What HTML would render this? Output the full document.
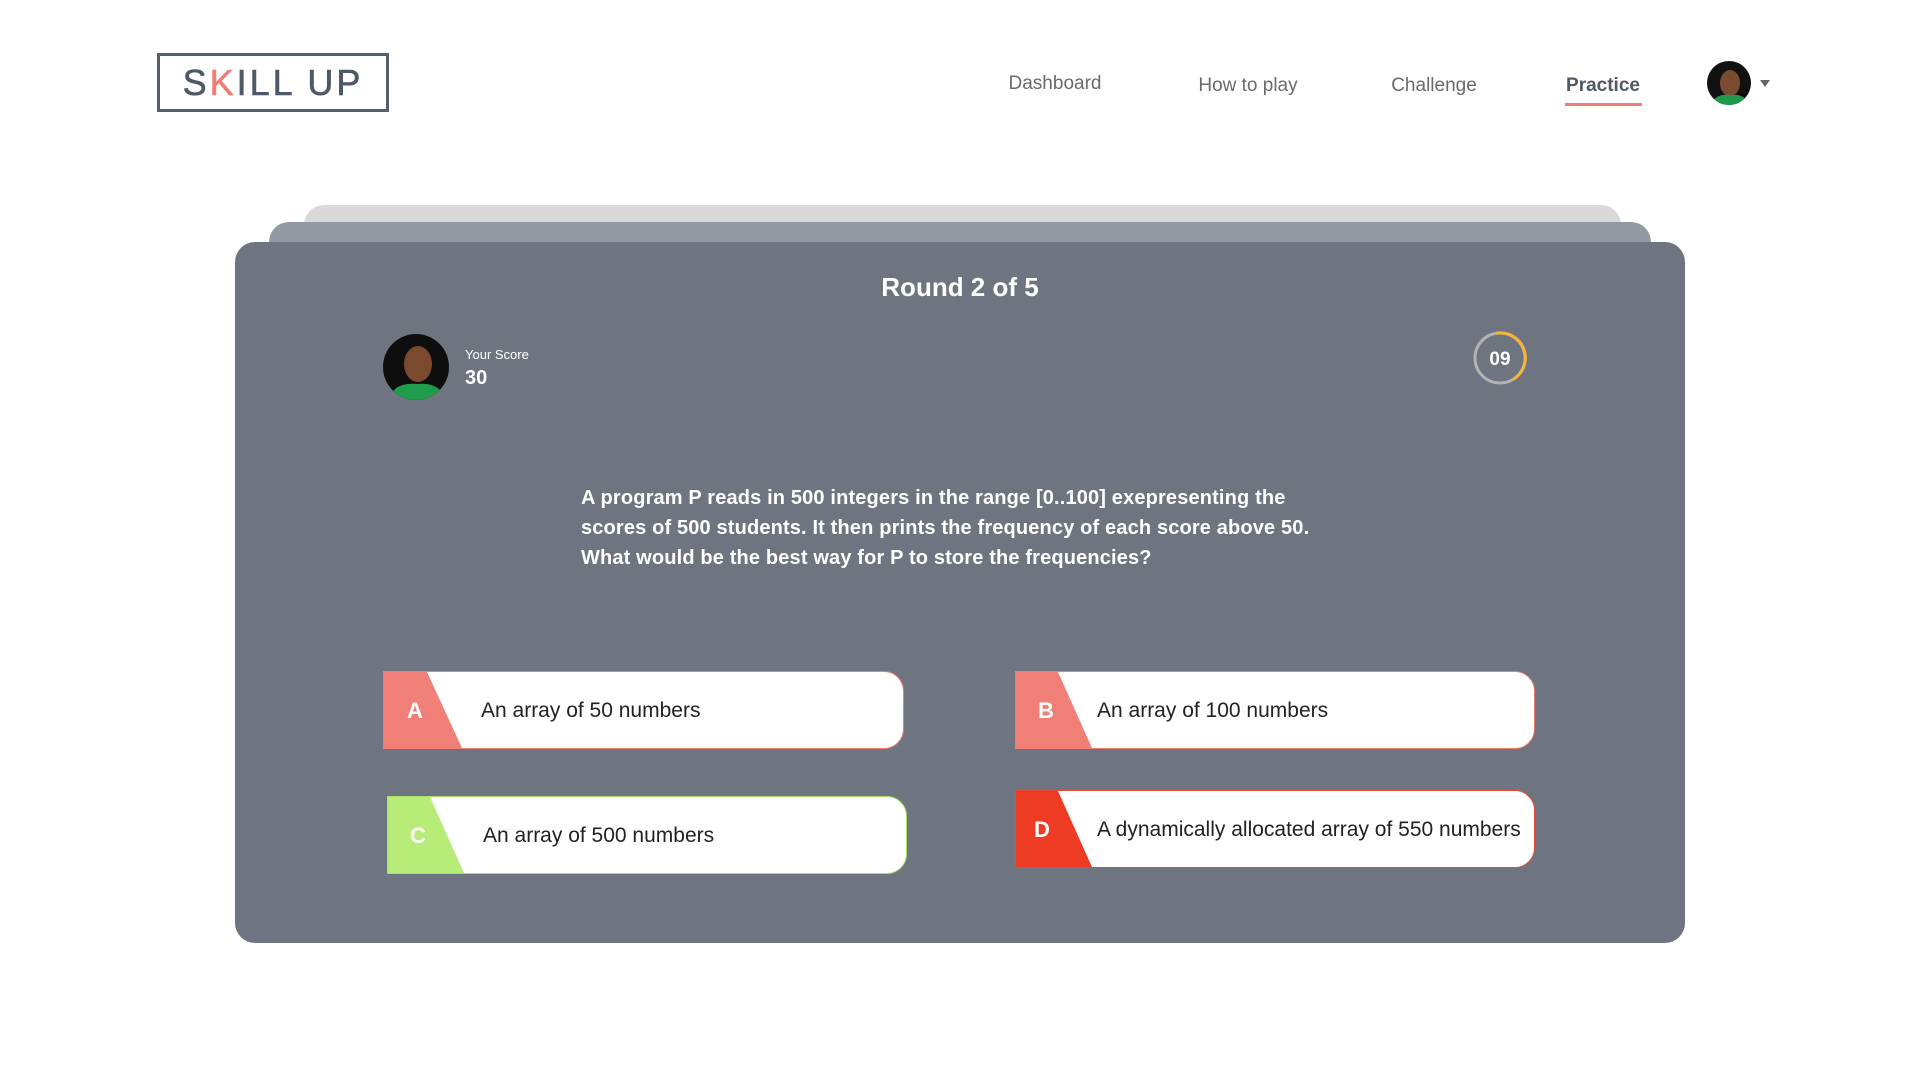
<!DOCTYPE html>
<html><head><meta charset="utf-8"><style>
*{margin:0;padding:0;box-sizing:border-box}
body{width:1920px;height:1080px;background:#fff;font-family:"Liberation Sans",sans-serif;position:relative;overflow:hidden}
.abs{position:absolute}
.logo{left:157px;top:53px;width:232px;height:59px;border:3px solid #555f6b;color:#4f5966;font-size:36px;letter-spacing:3px;text-align:center;line-height:53px;font-weight:600;-webkit-text-stroke:0.6px #4f5966}
.nav{top:75px;font-size:19px;color:#6a6a6a;transform:translateX(-50%)}
.card{border-radius:20px 20px 0 0}
.opt{position:absolute;height:78px;background:#fff;border-radius:0 20px 20px 0;overflow:hidden}
.opt .tag{position:absolute;left:0;top:0;height:100%;width:80px}
.opt .l{position:absolute;top:0;line-height:78px;color:#fff;font-weight:bold;font-size:22px}
.opt .t{position:absolute;left:97px;top:0;line-height:78px;font-size:21px;color:#222}
</style></head><body>
<div class="abs logo"><span style="font-weight:normal">S<span style="color:#f07c72;-webkit-text-stroke:0.6px #f07c72">K</span>ILL UP</span></div>
<div class="abs nav" style="left:1055px;top:73px">Dashboard</div>
<div class="abs nav" style="left:1248px">How to play</div>
<div class="abs nav" style="left:1434px">Challenge</div>
<div class="abs nav" style="left:1603px;color:#4f5966;font-weight:bold">Practice</div>
<div class="abs" style="left:1565px;top:103px;width:77px;height:3px;background:#f07c72"></div>
<svg class="abs" style="left:1706px;top:61px" width="70" height="46" viewBox="0 0 70 46">
<defs><clipPath id="c1"><circle cx="23" cy="22" r="22"/></clipPath></defs>
<g clip-path="url(#c1)"><rect width="46" height="46" fill="#111"/><ellipse cx="24" cy="22" rx="10" ry="13" fill="#7a4b30"/><path d="M4 46 Q8 32 24 34 Q40 32 44 46Z" fill="#1e9a4a"/></g>
<path d="M54 19 L64 19 L59 26Z" fill="#666"/></svg>

<div class="abs card" style="left:304px;top:205px;width:1317px;height:60px;background:#d9d9d9"></div>
<div class="abs card" style="left:269px;top:222px;width:1382px;height:60px;background:#9399a3"></div>
<div class="abs" style="left:235px;top:242px;width:1450px;height:701px;background:#6f7580;border-radius:20px"></div>

<div class="abs" style="left:0;width:1920px;top:272px;text-align:center;color:#fff;font-weight:bold;font-size:26px">Round 2 of 5</div>

<svg class="abs" style="left:383px;top:334px" width="66" height="66" viewBox="0 0 66 66">
<defs><clipPath id="c2"><circle cx="33" cy="33" r="33"/></clipPath></defs>
<g clip-path="url(#c2)"><rect width="66" height="66" fill="#0e0e0e"/><ellipse cx="35" cy="30" rx="14" ry="18" fill="#7b4a2e"/><path d="M6 66 Q10 48 34 50 Q58 48 62 66Z" fill="#1f9c4c"/></g></svg>
<div class="abs" style="left:465px;top:347px;color:#fff;font-size:13px">Your Score</div>
<div class="abs" style="left:465px;top:367px;color:#fff;font-size:20px;font-weight:bold">30</div>

<svg class="abs" style="left:1472px;top:330px" width="56" height="56" viewBox="0 0 56 56">
<circle cx="28" cy="28" r="25" fill="none" stroke="#b3b3b3" stroke-width="3"/>
<path d="M24 3.3 A25 25 0 0 1 41 49.5" fill="none" stroke="#f6b53a" stroke-width="3"/>
<text x="28" y="35" text-anchor="middle" fill="#fff" font-size="19" font-weight="bold" font-family="Liberation Sans">09</text></svg>

<div class="abs" style="left:581px;top:483px;color:#fff;font-weight:bold;font-size:20px;line-height:30px;letter-spacing:0.15px">A program P reads in 500 integers in the range [0..100] exepresenting the<br>scores of 500 students. It then prints the frequency of each score above 50.<br>What would be the best way for P to store the frequencies?</div>

<div class="opt" style="left:383px;top:671px;width:521px;border:1px solid #f07c72"><svg class="tag" viewBox="0 0 80 78" preserveAspectRatio="none"><path d="M0 0H43L78 78H0Z" fill="#f08077"/></svg><span class="l" style="left:23px">A</span><span class="t">An array of 50 numbers</span></div>
<div class="opt" style="left:1015px;top:671px;width:520px;border:1px solid #f07c72"><svg class="tag" viewBox="0 0 80 78" preserveAspectRatio="none"><path d="M0 0H42L76 78H0Z" fill="#f08077"/></svg><span class="l" style="left:22px">B</span><span class="t" style="left:81px">An array of 100 numbers</span></div>
<div class="opt" style="left:387px;top:796px;width:520px;border:1px solid #a8e06a"><svg class="tag" viewBox="0 0 80 78" preserveAspectRatio="none"><path d="M0 0H42L76 78H0Z" fill="#b8ec78"/></svg><span class="l" style="left:22px">C</span><span class="t" style="left:95px">An array of 500 numbers</span></div>
<div class="opt" style="left:1015px;top:790px;width:520px;border:1px solid #e84a35"><svg class="tag" viewBox="0 0 80 78" preserveAspectRatio="none"><path d="M0 0H42L76 78H0Z" fill="#ee3b24"/></svg><span class="l" style="left:18px">D</span><span class="t" style="left:81px">A dynamically allocated array of 550 numbers</span></div>
</body></html>
